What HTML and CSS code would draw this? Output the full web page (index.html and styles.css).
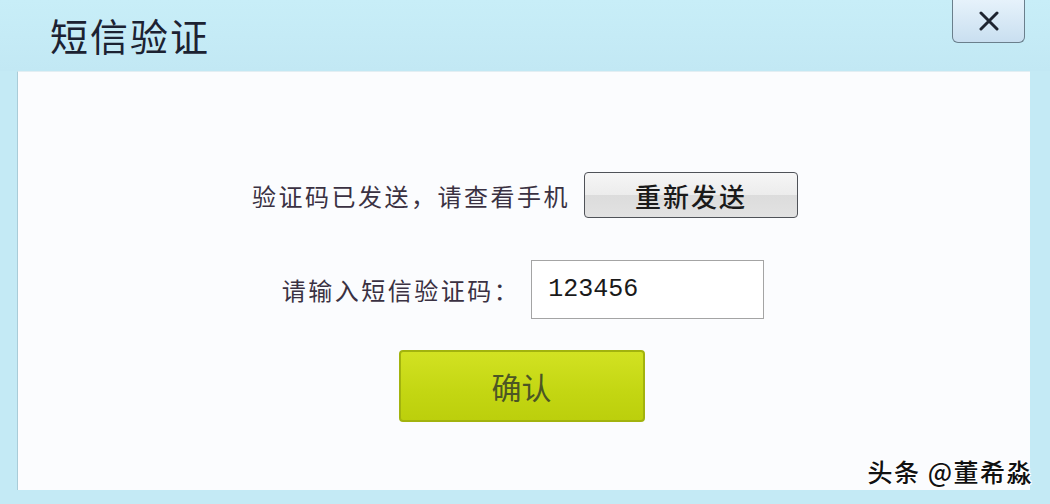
FILE: index.html
```html
<!DOCTYPE html>
<html>
<head>
	<title>短信验证</title>
	<meta charset="utf-8">
	<link rel="stylesheet" href="styles.css">
</head>
<body>
	<div class="dialog">
		<div class="titlebar">
			<h1 class="title">短信验证</h1>
			<button class="close" type="button" aria-label="关闭">
				<svg width="22" height="20" viewBox="0 0 22 20">
					<path d="M3 2 L19 18 M19 2 L3 18" stroke="#1e2430" stroke-width="3" stroke-linecap="round" fill="none"/>
				</svg>
			</button>
		</div>
		<div class="panel">
			<div class="row sent">
				<span class="label">验证码已发送，请查看手机</span>
				<button class="resend" type="button">重新发送</button>
			</div>
			<div class="row code">
				<label class="label" for="code">请输入短信验证码：</label>
				<input class="code-input" type="text" id="code" value="123456">
			</div>
			<div class="row">
				<button class="confirm" type="button">确认</button>
			</div>
		</div>
		<div class="watermark">头条 @董希淼</div>
	</div>
</body>
</html>
```

FILE: styles.css
```css
html, body {
	margin: 0;
	padding: 0;
}
body {
	width: 1050px;
	height: 504px;
	overflow: hidden;
	background: #c4eaf5;
	font-family: "Noto Sans CJK SC", "Noto Sans", sans-serif;
}
.dialog {
	position: relative;
	height: 504px;
	display: flex;
	flex-direction: column;
}
.titlebar {
	height: 71px;
	display: flex;
	justify-content: space-between;
	align-items: flex-start;
	padding: 0 25px 0 50px;
	background: linear-gradient(#c8eef8, #c2e8f4);
}
.title {
	margin: 12px 0 0;
	font-size: 38px;
	font-weight: normal;
	line-height: 46px;
	color: #1c2232;
	letter-spacing: 2px;
}
.close {
	width: 73px;
	height: 43px;
	margin: 0;
	padding: 0;
	border: 1px solid #6a7f8c;
	border-top: none;
	border-radius: 0 0 6px 6px;
	background: linear-gradient(#e6f2fb, #c9dff0);
	display: flex;
	align-items: center;
	justify-content: center;
}
.panel {
	height: 419px;
	margin: 0 20px 0 17px;
	background: #fbfcfe;
	border-left: 1px solid #a9ccd8;
	border-top: 1px solid #e2eef3;
	box-sizing: border-box;
	display: flex;
	flex-direction: column;
	align-items: center;
	padding-top: 100px;
}
.row {
	display: flex;
	align-items: center;
}
.label {
	font-size: 24px;
	letter-spacing: 2.5px;
	color: #3a3142;
}
.sent {
	gap: 14px;
	height: 46px;
	margin-left: 2px;
}
.resend {
	width: 214px;
	height: 46px;
	border: 1px solid #4f5258;
	border-radius: 4px;
	background: linear-gradient(#f6f6f6 0%, #ececec 50%, #dcdcdc 51%, #e2e2e2 100%);
	font-family: "Noto Sans CJK SC", sans-serif;
	font-size: 26px;
	font-weight: 500;
	color: #1a1a1a;
	letter-spacing: 2px;
	padding: 0;
}
.code {
	gap: 11px;
	margin-top: 42px;
	margin-left: -2px;
}
.code-input {
	width: 233px;
	height: 59px;
	box-sizing: border-box;
	border: 1px solid #a4a4a4;
	background: #fff;
	padding: 0 0 0 16px;
	font-family: "Liberation Mono", "DejaVu Sans Mono", monospace;
	font-size: 25px;
	color: #1a1a1a;
}
.row:last-child {
	margin-top: 31px;
}
.confirm {
	width: 246px;
	height: 72px;
	margin-right: 5px;
	border: 2px solid #a2b30e;
	border-radius: 4px;
	background: linear-gradient(#d2e222, #c3d612 60%, #bccf0c);
	font-family: "Noto Sans CJK SC", sans-serif;
	font-size: 30px;
	color: #4c5624;
	padding: 0;
}
.watermark {
	position: absolute;
	right: 17px;
	bottom: 15px;
	font-size: 25px;
	font-weight: 500;
	letter-spacing: 1.5px;
	color: #111;
	text-shadow: 1px 1px 0 #fff, -1px -1px 0 #fff, 1px -1px 0 #fff, -1px 1px 0 #fff;
}
```
